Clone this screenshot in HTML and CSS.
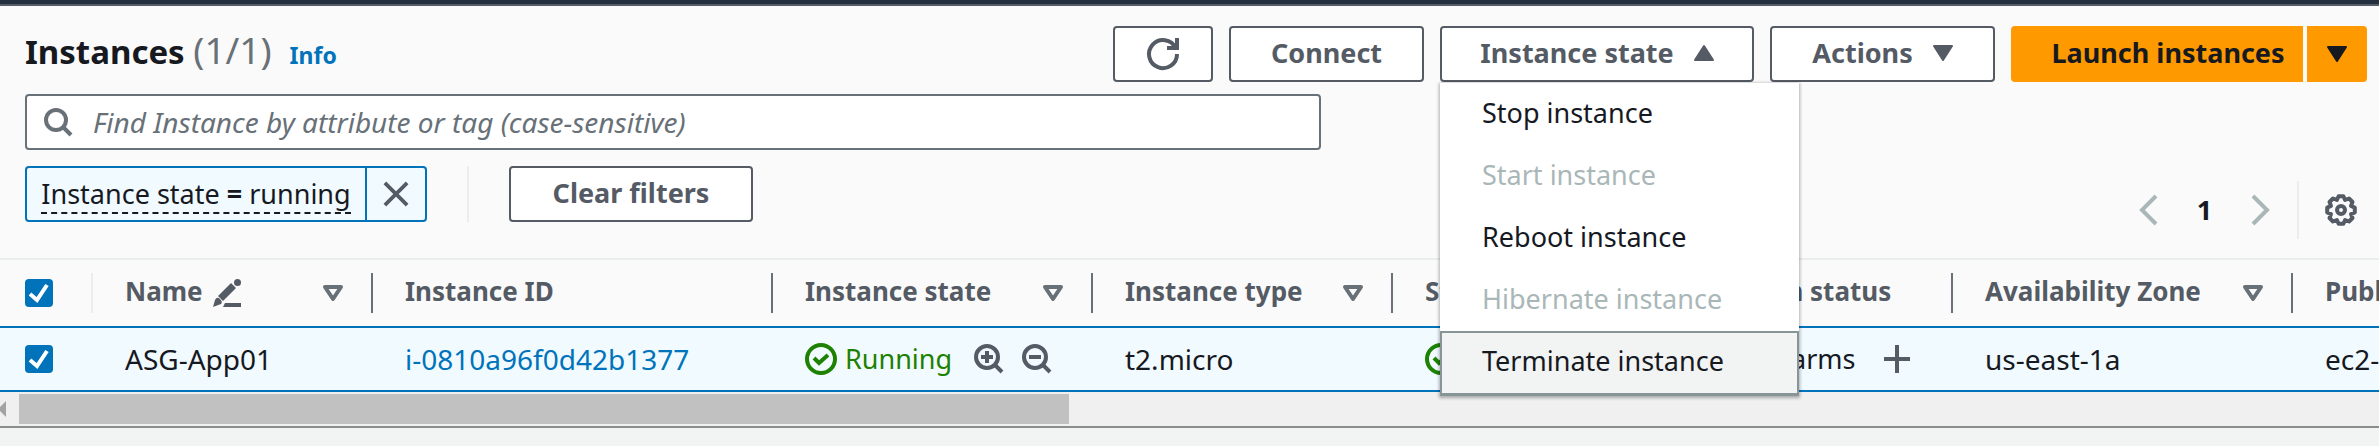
FILE: index.html
```html
<!DOCTYPE html>
<html lang="en">
<head>
<meta charset="utf-8">
<title>Instances</title>
<link rel="stylesheet" href="styles.css">
</head>
<body>
<div class="topbar"></div>
<main class="panel">
  <header class="toolbar">
    <div class="title-row">
      <div class="heading">
        <h1 class="title">Instances <span class="count">(1/1)</span></h1>
        <a class="info" href="#">Info</a>
      </div>
      <div class="actions">
        <button class="btn btn-icon" type="button" aria-label="Refresh">
          <svg class="icon" viewBox="0 0 16 16"><path d="M10 5h5V0"/><path d="M15 8a7 7 0 1 1-.7-3"/></svg>
        </button>
        <button class="btn btn-connect" type="button">Connect</button>
        <div class="dropdown">
          <button class="btn btn-state" type="button" aria-expanded="true">Instance state
            <svg class="caret" viewBox="0 0 20 16"><path d="M10 1 19 15H1z"/></svg>
          </button>
          <div class="menu" role="menu">
            <button class="item" type="button" role="menuitem">Stop instance</button>
            <button class="item" type="button" role="menuitem" disabled>Start instance</button>
            <button class="item" type="button" role="menuitem">Reboot instance</button>
            <button class="item" type="button" role="menuitem" disabled>Hibernate instance</button>
            <button class="item item-active" type="button" role="menuitem">Terminate instance</button>
          </div>
        </div>
        <button class="btn btn-actions" type="button">Actions
          <svg class="caret" viewBox="0 0 20 16"><path d="M10 15 1 1h18z"/></svg>
        </button>
        <div class="split">
          <button class="btn btn-primary btn-launch" type="button">Launch instances</button>
          <button class="btn btn-primary btn-more" type="button" aria-label="More launch options">
            <svg class="caret" viewBox="0 0 20 16"><path d="M10 15 1 1h18z"/></svg>
          </button>
        </div>
      </div>
    </div>
    <div class="search">
      <svg class="icon-search" viewBox="0 0 30 30"><circle cx="13" cy="13" r="10"/><path d="m20 20 8 8"/></svg>
      <input class="search-input" type="text" aria-label="Find Instance" placeholder="Find Instance by attribute or tag (case-sensitive)">
    </div>
    <div class="filter-row">
      <div class="token">
        <button class="token-label" type="button"><span class="token-text">Instance state <b>=</b> running</span></button>
        <button class="token-close" type="button" aria-label="Remove filter">
          <svg class="icon-close" viewBox="0 0 28 28"><path d="m2 2 24 24M26 2 2 26"/></svg>
        </button>
      </div>
      <div class="rule"></div>
      <button class="btn btn-clear" type="button">Clear filters</button>
      <nav class="pager">
        <button class="plain" type="button" aria-label="Previous page" disabled>
          <svg class="chevron" viewBox="0 0 18 32"><path d="M16 2 2 16l14 14"/></svg>
        </button>
        <span class="page">1</span>
        <button class="plain" type="button" aria-label="Next page" disabled>
          <svg class="chevron" viewBox="0 0 18 32"><path d="m2 2 14 14L2 30"/></svg>
        </button>
        <span class="pager-rule"></span>
        <button class="plain" type="button" aria-label="Preferences">
          <svg class="icon gear" viewBox="-16 -16 32 32"><circle r="4"/><path d="M-2.4-13.8H2.4L4.1-10 8-11.5 11.5-8 10-4.1 13.8-2.4V2.4L10 4.1 11.5 8 8 11.5 4.1 10 2.4 13.8H-2.4L-4.1 10-8 11.5-11.5 8-10 4.1-13.8 2.4V-2.4L-10-4.1-11.5-8-8-11.5-4.1-10z"/></svg>
        </button>
      </nav>
    </div>
  </header>
  <div class="table-wrap">
    <table class="grid">
      <colgroup>
        <col class="c-check"><col class="c-name"><col class="c-id"><col class="c-state"><col class="c-type"><col class="c-status"><col class="c-alarm"><col class="c-zone"><col>
      </colgroup>
      <thead>
        <tr>
          <th class="check-cell"><div class="head head-check"><input class="check" type="checkbox" aria-label="Select all" checked></div></th>
          <th><div class="head"><span>Name</span><svg class="icon-edit" viewBox="0 0 28 28"><path d="M0 28 2 21Q4 17 7 20T8 25zM5 17 18 4l5 5L10 22zM12 24h16v4H10z"/><circle cx="24.5" cy="3.5" r="3.5"/></svg><svg class="sort" viewBox="0 0 20 16"><path d="M2 2h16l-8 12z"/></svg></div></th>
          <th><div class="head"><span>Instance ID</span></div></th>
          <th><div class="head"><span>Instance state</span><svg class="sort" viewBox="0 0 20 16"><path d="M2 2h16l-8 12z"/></svg></div></th>
          <th><div class="head"><span>Instance type</span><svg class="sort" viewBox="0 0 20 16"><path d="M2 2h16l-8 12z"/></svg></div></th>
          <th><div class="head"><span>Status check</span></div></th>
          <th><div class="head"><span>Alarm status</span></div></th>
          <th><div class="head"><span>Availability Zone</span><svg class="sort" viewBox="0 0 20 16"><path d="M2 2h16l-8 12z"/></svg></div></th>
          <th><div class="head"><span>Public</span></div></th>
        </tr>
      </thead>
      <tbody>
        <tr>
          <td class="check-cell"><input class="check" type="checkbox" aria-label="Select ASG-App01" checked></td>
          <td>ASG-App01</td>
          <td><a class="link" href="#">i-0810a96f0d42b1377</a></td>
          <td><div class="cell ok"><svg class="icon" viewBox="0 0 32 32"><circle cx="16" cy="16" r="14"/><path d="m9 15 5 5 9-8"/></svg><span class="ok-text">Running</span>
            <button class="plain" type="button" aria-label="Include filter"><svg class="icon-zoom" viewBox="0 0 30 30"><circle cx="13" cy="13" r="11"/><path d="m21 21 7 7M7 13h12M13 7v12"/></svg></button>
            <button class="plain zoom-out" type="button" aria-label="Exclude filter"><svg class="icon-zoom" viewBox="0 0 30 30"><circle cx="13" cy="13" r="11"/><path d="m21 21 7 7M7 13h12"/></svg></button></div></td>
          <td>t2.micro</td>
          <td><div class="cell ok"><svg class="icon" viewBox="0 0 32 32"><circle cx="16" cy="16" r="14"/><path d="m9 15 5 5 9-8"/></svg></div></td>
          <td><div class="cell"><span>No alarms</span><button class="plain add" type="button" aria-label="Add alarm"><svg class="icon-plus" viewBox="0 0 28 28"><path d="M14 0v28M1 14h26"/></svg></button></div></td>
          <td>us-east-1a</td>
          <td>ec2-</td>
        </tr>
      </tbody>
    </table>
    <div class="scrollbar"><svg class="scroll-arrow" viewBox="0 0 6 16"><path d="M6 0v16L-2 8z"/></svg><div class="thumb"></div></div>
  </div>
</main>
</body>
</html>
```
FILE: styles.css
```css
* { box-sizing: border-box; }
body {
  margin: 0;
  background: #f2f3f3;
  color: #16191f;
  font: 27px/36px "Noto Sans", "Open Sans", sans-serif;
  overflow: hidden;
}
button, input { font: inherit; color: inherit; margin: 0; }
button { cursor: pointer; white-space: nowrap; }
svg { display: block; flex: none; fill: none; stroke: currentColor; overflow: visible; }

.topbar { height: 6px; background: #232f3e; border-bottom: 2px solid #545b64; }
.panel { background: #fafafa; border-bottom: 2px solid #8a8c8e; box-shadow: 0 1px 1px #c8cacb; }
.toolbar { padding: 20px 12px 36px 25px; }

.title-row { display: flex; align-items: flex-start; height: 56px; }
.heading { display: flex; align-items: baseline; gap: 18px; }
.title { margin: 0; font-size: 33px; line-height: 48px; font-weight: 700; }
.count { font-size: 37px; font-weight: 400; color: #687078; }
.info { font-size: 23px; font-weight: 700; color: #0073bb; text-decoration: none; }

.actions { display: flex; gap: 16px; margin-left: auto; }
.btn {
  display: flex; align-items: center; justify-content: center; gap: 20px;
  height: 56px; padding: 0 36px 2px;
  border: 2px solid #545b64; border-radius: 4px;
  background: #fff; color: #545b64; font-weight: 700;
}
.btn-icon { width: 100px; padding: 0; }
.btn-connect { min-width: 195px; }
.btn-state { min-width: 314px; }
.btn-actions { min-width: 225px; }
.split { display: flex; gap: 4px; }
.btn-primary { border-color: #f90; background: #f90; color: #16191f; }
.btn-launch { min-width: 292px; padding: 0 14px 2px 36px; border-radius: 4px 0 0 4px; }
.btn-more { width: 60px; padding: 0; border-radius: 0 4px 4px 0; }
.icon { width: 32px; height: 32px; stroke-width: 2; }
.caret { width: 20px; height: 16px; fill: currentColor; stroke-width: 2; stroke-linejoin: round; }

.dropdown { position: relative; }
.menu {
  position: absolute; z-index: 2; top: 57px; left: 0; width: 359px;
  background: #fff; box-shadow: 0 1px 3px 1px #0000004d;
}
.item {
  display: block; width: 100%; height: 62px; padding: 0 40px 2px;
  border: 2px solid transparent; background: none; text-align: left;
}
.item:disabled { color: #aab7b8; }
.item-active { height: 65px; padding-bottom: 4px; border-color: #879596; border-bottom-width: 3px; background: #f2f3f3; }

.search {
  display: flex; align-items: center; gap: 20px;
  width: 100%; max-width: 1296px; height: 56px; margin-top: 12px; padding-left: 16px;
  border: 2px solid #687078; border-radius: 4px; background: #fff; color: #687078;
}
.icon-search { width: 30px; height: 30px; stroke-width: 4; }
.search-input { flex: 1; min-width: 0; padding: 0; border: 0; outline: 0; background: none; font-size: 28px; }
.search-input::placeholder { color: #687078; font-style: italic; opacity: 1; }

.filter-row { display: flex; align-items: flex-start; height: 56px; margin-top: 16px; }
.token { display: flex; height: 56px; border: 2px solid #0073bb; border-radius: 4px; background: #f1faff; }
.token-label { min-width: 338px; padding: 0 14px; border: 0; background: none; }
.token-text { border-bottom: 2px dashed #16191f; }
.token-close { width: 60px; padding: 0 16px; border: 0; border-left: 2px solid #0073bb; background: none; color: #545b64; }
.icon-close { width: 26px; height: 26px; stroke-width: 4; }
.rule { width: 2px; height: 56px; margin: 0 40px; background: #eaeded; }
.btn-clear { min-width: 244px; }

.pager { display: flex; align-items: center; height: 58px; margin: 15px 10px 0 auto; color: #16191f; font-weight: 700; }
.plain { padding: 0; border: 0; background: none; color: #545b64; }
.plain:disabled { color: #aab7b8; }
.chevron { width: 18px; height: 32px; stroke-width: 4; }
.page { width: 93px; text-align: center; }
.pager-rule { width: 2px; height: 58px; margin: 0 26px 0 28px; background: #eaeded; }
.gear { stroke-width: 4; stroke-linejoin: round; }

.table-wrap { overflow: hidden; border-top: 2px solid #eaeded; }
.grid { width: 100%; table-layout: fixed; border-collapse: separate; border-spacing: 0; }
.c-check { width: 93px; }
.c-name { width: 280px; }
.c-id { width: 400px; }
.c-state { width: 320px; }
.c-type { width: 300px; }
.c-status { width: 300px; }
.c-alarm { width: 260px; }
.c-zone { width: 340px; }
.grid th, .grid td { padding: 0 0 0 32px; text-align: left; white-space: nowrap; overflow: hidden; }
.grid th { height: 66px; color: #545b64; font-size: 26px; }
.grid td { height: 66px; border: solid #0073bb; border-width: 2px 0; background: #f1faff; font-size: 28px; }
.grid .check-cell { padding-left: 25px; }
.head { display: flex; align-items: center; gap: 10px; height: 40px; padding-right: 28px; border-right: 2px solid #687078; }
.head span { padding-bottom: 4px; }
.head-check { border-color: #eaeded; }
th:last-child .head { padding: 0; border: 0; }
.icon-edit { width: 28px; height: 28px; fill: currentColor; stroke: none; }
.sort { width: 20px; height: 16px; margin-left: auto; stroke-width: 4; stroke-linejoin: round; color: #687078; }
.check {
  display: block; flex: none; width: 28px; height: 28px; appearance: none;
  border-radius: 4px; background: #0073bb url("data:image/svg+xml,%3Csvg xmlns='http://www.w3.org/2000/svg' viewBox='0 0 28 28'%3E%3Cpath d='m5 15 7 6 10-15' fill='none' stroke='white' stroke-width='4'/%3E%3C/svg%3E");
}
.link { color: #0073bb; text-decoration: none; }
.cell { display: flex; align-items: center; font-size: 27px; }
.ok { color: #1d8102; }
.cell .icon { stroke-width: 4; }
.ok-text { margin: 0 22px 0 8px; }
.zoom-out { margin-left: 18px; }
.icon-zoom { width: 30px; height: 30px; stroke-width: 4; }
.add { margin-left: 28px; }
.icon-plus { width: 28px; height: 28px; stroke-width: 4; }

.scrollbar { display: flex; align-items: center; gap: 13px; height: 34px; background: #f0f0f0; }
.scroll-arrow { width: 6px; height: 16px; fill: #a3a3a3; stroke: none; }
.thumb { width: 1050px; height: 30px; background: #c1c1c1; }
```
